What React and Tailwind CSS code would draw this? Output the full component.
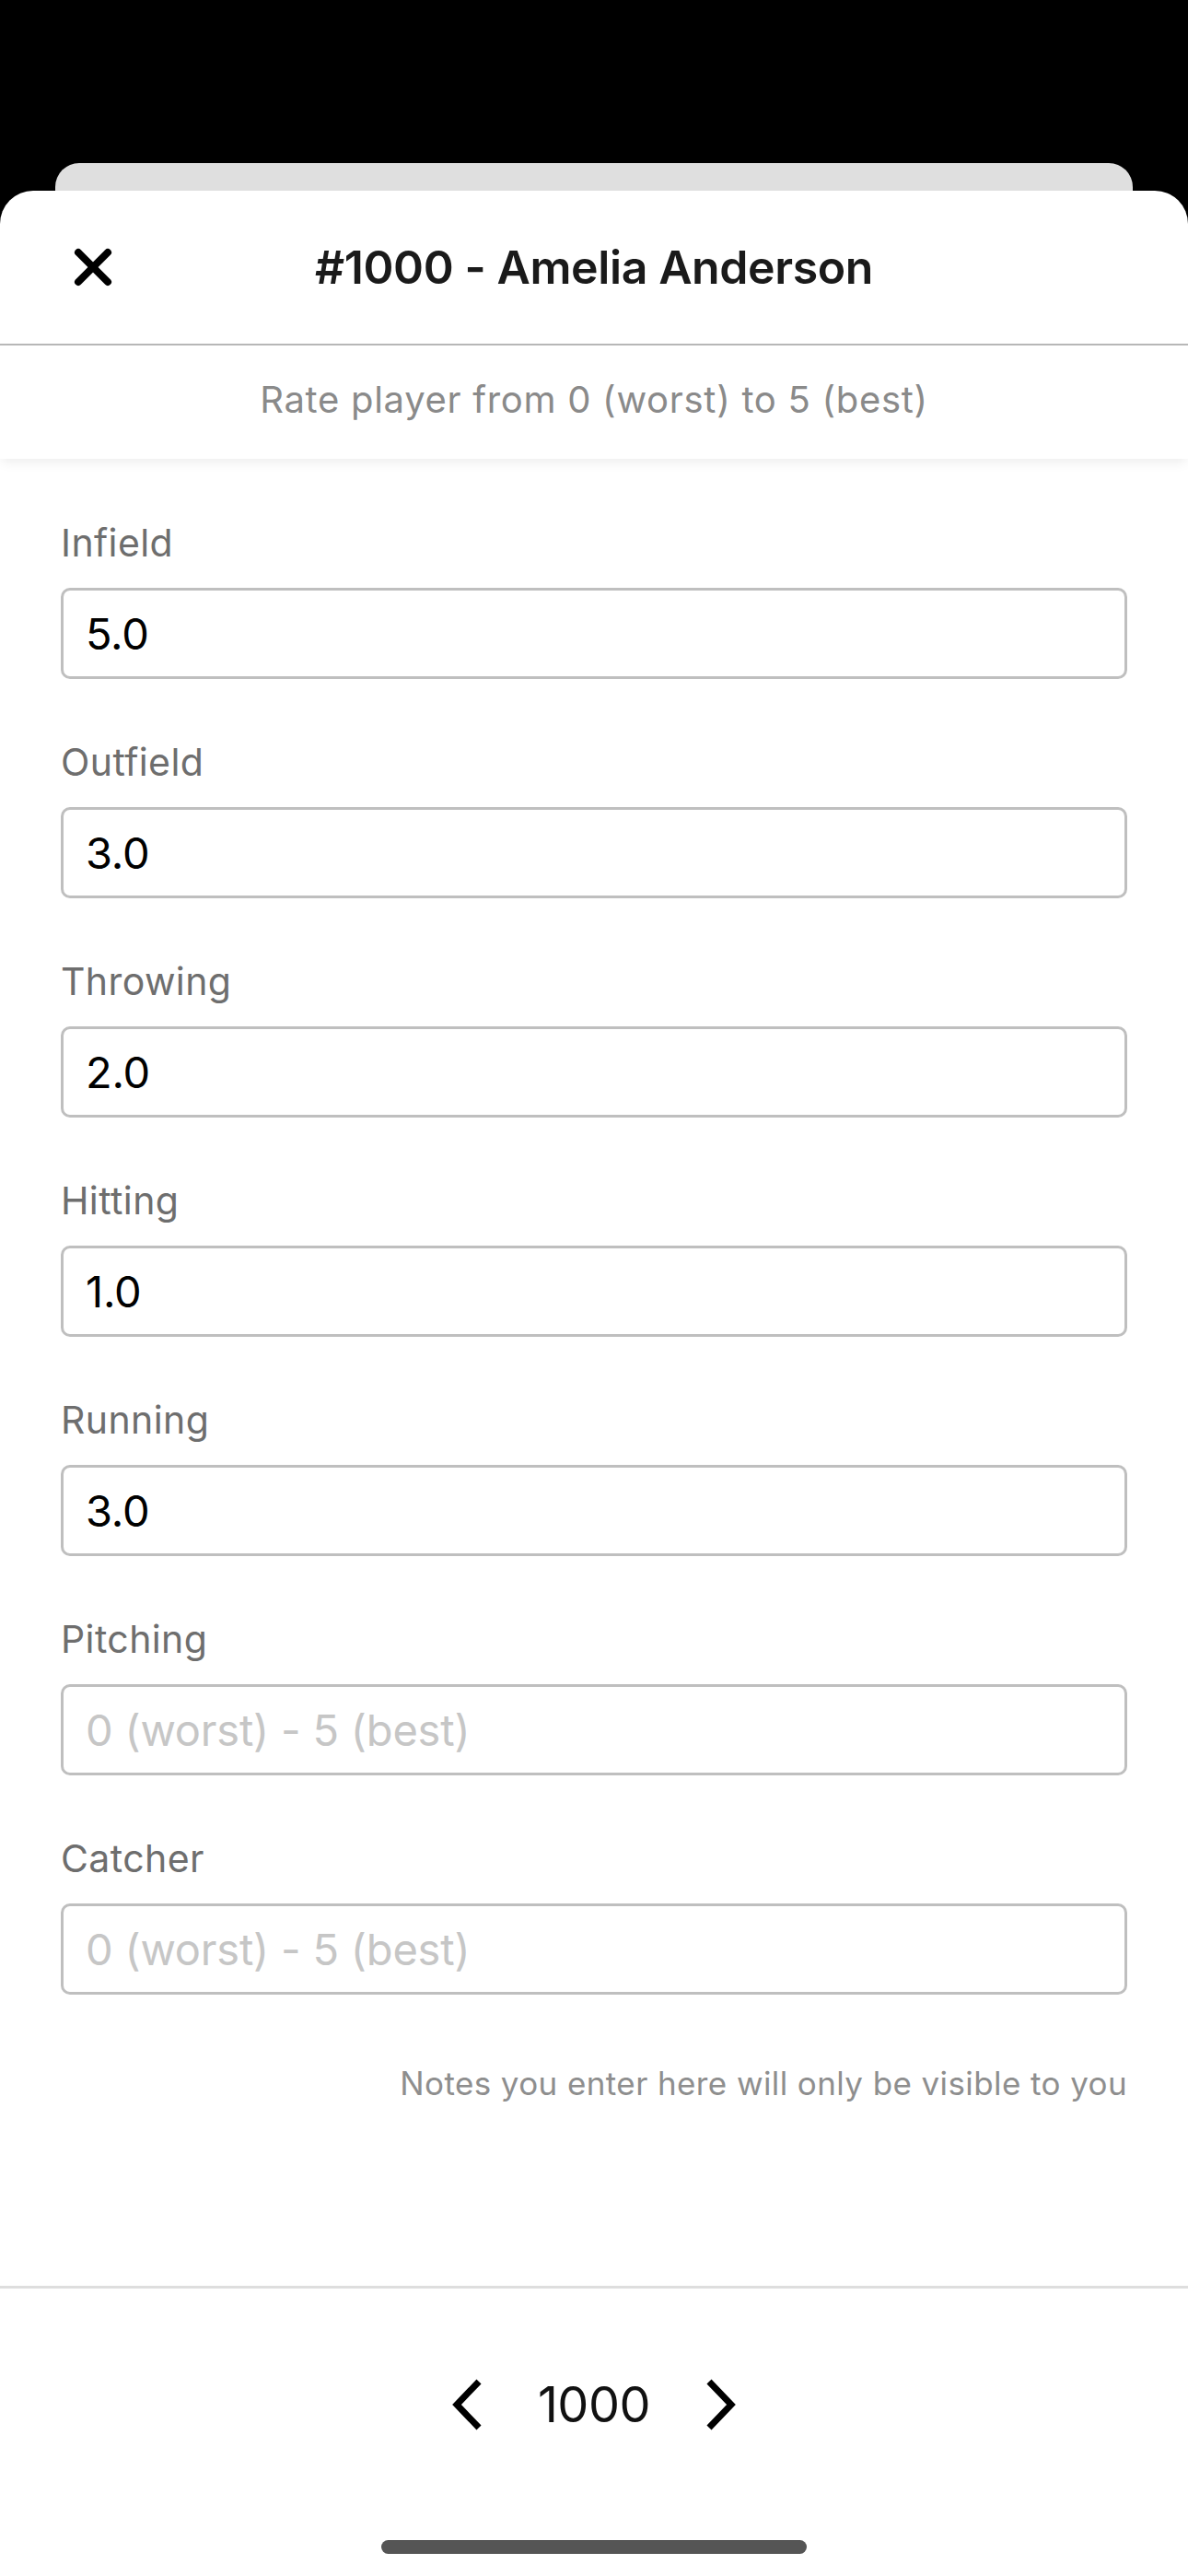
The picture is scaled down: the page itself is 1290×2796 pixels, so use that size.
import React from "react";

const fields = [
  { label: "Infield", value: "5.0" },
  { label: "Outfield", value: "3.0" },
  { label: "Throwing", value: "2.0" },
  { label: "Hitting", value: "1.0" },
  { label: "Running", value: "3.0" },
  { label: "Pitching", value: "" },
  { label: "Catcher", value: "" },
];

function Chevron({ dir }) {
  const pts = dir === "left" ? "30,3 6,28 30,53" : "4,3 28,28 4,53";
  return (
    <svg width="34" height="56" viewBox="0 0 34 56" className="block">
      <polyline
        points={pts}
        fill="none"
        stroke="#000"
        strokeWidth="7"
        strokeLinecap="butt"
        strokeLinejoin="miter"
      />
    </svg>
  );
}

export default function App() {
  return (
    <div className="w-[1290px] h-[2796px] bg-black flex flex-col overflow-hidden font-['Inter',sans-serif]">
      <div className="h-[177px] shrink-0" />
      <div className="mx-[60px] h-[30px] shrink-0 bg-[#dfdfdf] rounded-t-[26px]" />
      <div className="flex-1 bg-white rounded-t-[36px] flex flex-col">
        {/* Header */}
        <div className="h-[168px] shrink-0 flex items-center border-b-2 border-[#b8b8b8]">
          <div className="w-[220px] pl-[79px] flex items-center">
            <svg width="44" height="44" viewBox="0 0 44 44" className="block">
              <line x1="6" y1="6" x2="38" y2="38" stroke="#000" strokeWidth="8" strokeLinecap="round" />
              <line x1="38" y1="6" x2="6" y2="38" stroke="#000" strokeWidth="8" strokeLinecap="round" />
            </svg>
          </div>
          <div className="flex-1 text-center text-[50px] leading-[60px] font-semibold text-[#1a1a1a] tracking-[-0.4px]">
            #1000 - Amelia Anderson
          </div>
          <div className="w-[220px]" />
        </div>
        {/* Subheader */}
        <div className="relative z-10 h-[123px] shrink-0 flex items-center justify-center pb-[5px] bg-white shadow-[0_6px_12px_-2px_rgba(0,0,0,0.07)]">
          <span className="text-[40px] leading-[48px] text-[#8a8a8a] tracking-[0.7px]">
            Rate player from 0 (worst) to 5 (best)
          </span>
        </div>
        {/* Content */}
        <div className="px-[66px] pt-[67px] flex flex-col gap-[66px]">
          {fields.map((f) => (
            <div key={f.label} className="flex flex-col">
              <div className="text-[41px] leading-[48px] text-[#6e6e6e] tracking-[0.4px]">{f.label}</div>
              <input
                readOnly
                defaultValue={f.value}
                placeholder="0 (worst) - 5 (best)"
                className="mt-[25px] w-full h-[99px] bg-white border-[3px] border-[#bfbfbf] rounded-[10px] pl-[24px] text-[47px] text-black tracking-[-0.2px] placeholder:text-[#c6c6c6] outline-none"
              />
            </div>
          ))}
        </div>
        <div className="px-[66px] pt-[75px] text-right text-[35px] leading-[42px] text-[#8e8e8e] tracking-[0.4px]">
          Notes you enter here will only be visible to you
        </div>
        {/* Footer */}
        <div className="mt-auto border-t-[3px] border-[#dedede] flex flex-col items-center">
          <div className="pt-[96px] h-[60px] flex items-center gap-[60px] box-content">
            <Chevron dir="left" />
            <span className="text-[54px] leading-[60px] text-[#111] tracking-[-0.5px]">1000</span>
            <Chevron dir="right" />
          </div>
          <div className="mt-[117px] mb-[24px] w-[462px] h-[15px] rounded-full bg-[#555555]" />
        </div>
      </div>
    </div>
  );
}
